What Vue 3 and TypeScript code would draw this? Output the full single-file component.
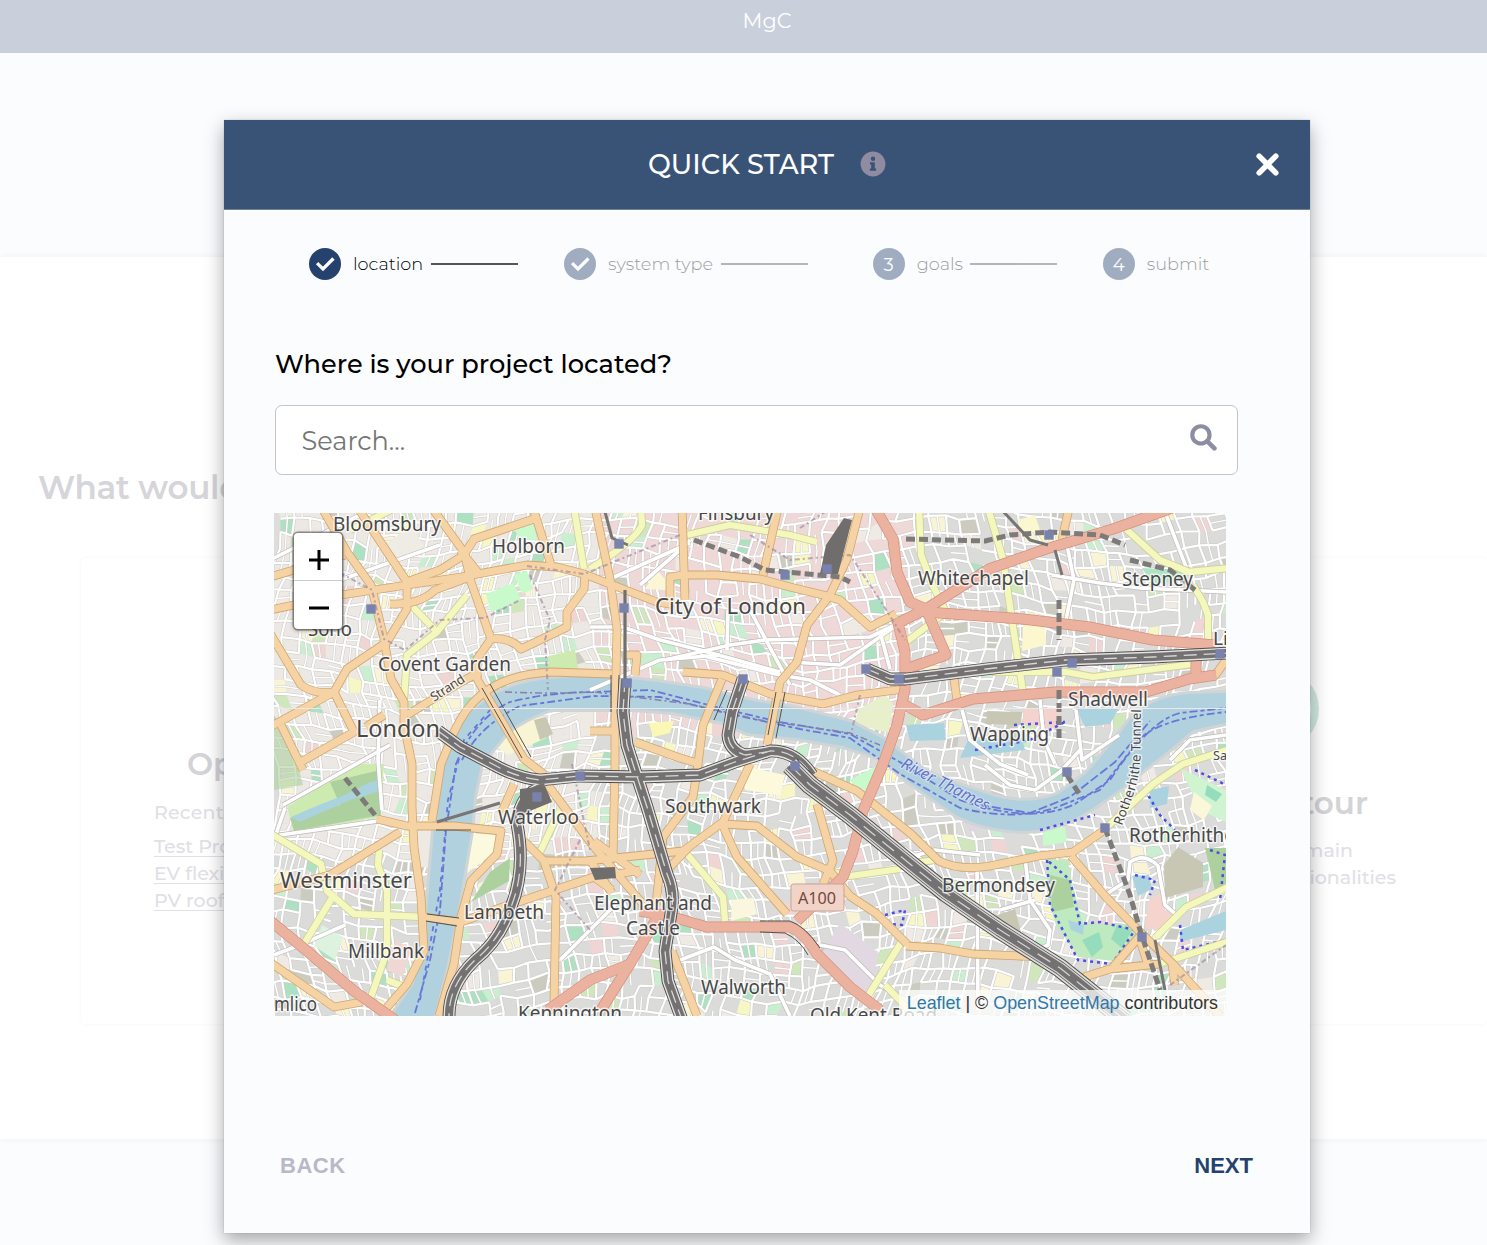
<script setup lang="ts">
interface Step { mark: string; label: string; width: number; start: number; line: number; active?: boolean }
interface Label { t: string; x: number; y: number; w: number; s: number }
interface Cell { d: string; fill: string }

const steps: Step[] = [
  { mark: 'check', label: 'location', width: 70, start: 0, line: 87.5, active: true },
  { mark: 'check', label: 'system type', width: 105, start: 46, line: 87.5 },
  { mark: '3', label: 'goals', width: 46, start: 64.7, line: 87 },
  { mark: '4', label: 'submit', width: 64, start: 45.6, line: 0 },
]

// Seeded generator keeps the street mesh stable between renders.
let seed = 71
const rnd = (): number => {
  seed = (seed * 16807) % 2147483647
  return seed / 2147483647
}
const COLS = 66
const ROWS = 37
const pts: number[][][] = []
for (let r = 0; r <= ROWS; r++) {
  const row: number[][] = []
  for (let c = 0; c <= COLS; c++) {
    const x = 266 + c * 15
    const y = 500 + r * 14.5
    row.push([
      Math.round((x + Math.sin(y / 42 + x / 190) * 13 + (rnd() - 0.5) * 6) * 10) / 10,
      Math.round((y + Math.sin(x / 55) * 11 + (rnd() - 0.5) * 6) * 10) / 10,
    ])
  }
  pts.push(row)
}
const cells: Cell[] = []
let streets = ''
let lanes = ''
const blots = ['#c9eed0', '#f7f7c6', '#efd5d3', '#d0e6bc', '#efeae4', '#f8f4d5', '#aee0c2', '#cccbc0']
for (let r = 0; r < ROWS; r++) {
  for (let c = 0; c < COLS; c++) {
    const [a, b, d, e] = [pts[r][c], pts[r][c + 1], pts[r + 1][c + 1], pts[r + 1][c]]
    const central = a[0] > 590 && a[0] < 900 && a[1] < 720
    const west = a[0] < 590 && a[1] < 850
    const k = rnd()
    let fill = central ? '#efd9d8' : west ? '#ece8e3' : '#dbdbd9'
    if (k > 0.77) fill = blots[Math.floor(rnd() * blots.length)]
    cells.push({ d: `M${a}L${b}L${d}L${e}Z`, fill })
    if (rnd() > 0.16) streets += `M${a}L${b}`
    if (rnd() > 0.16) streets += `M${a}L${e}`
    if (rnd() > 0.5) {
      const m = [(a[0] + b[0]) / 2, (a[1] + b[1]) / 2]
      const n = [(d[0] + e[0]) / 2, (d[1] + e[1]) / 2]
      lanes += rnd() > 0.3 ? `M${m}L${n}` : `M${(a[0] + e[0]) / 2},${(a[1] + e[1]) / 2}L${(b[0] + d[0]) / 2},${(b[1] + d[1]) / 2}`
    }
  }
}

const river =
  'M392 1016L414 984L426 924L434 831L444 764L451 739Q458 722 474 710Q490 695 507 689Q530 680 551 679L594 675L657 682L703 689L757 702L790 707L850 722L883 739L926 772L956 784L996 797Q1030 806 1059 794L1086 774L1099 759L1119 735Q1134 712 1150 704Q1170 695 1190 694L1230 693L1230 722L1193 730L1169 750L1146 768L1123 787L1093 808Q1060 829 1026 831Q985 830 956 815L906 780L883 759L843 746L797 738L747 733L723 722L673 712L633 709L551 709Q525 718 507 732L481 764L474 797L471 831L457 914L447 964L434 1016Z'

const minor = [
  'M590 627L623 627L660 640L700 650L780 672', 'M640 585L680 550L690 540', 'M612 578L690 543', 'M665 660L730 645L765 640L870 637L895 625',
  'M728 610L727 650', 'M750 610L790 685', 'M790 662L840 665L897 625', 'M880 632L890 669', 'M700 655L780 675L810 680L840 695',
  'M1052 575L1100 583L1140 588L1226 592', 'M1067 545L1074 580L1066 620', 'M1165 512L1188 572', 'M962 710L970 740L1000 764L1028 775',
  'M1040 700L1044 740L1055 764', 'M1076 710L1082 760L1119 735', 'M283 805L390 745', 'M280 835L378 821', 'M274 840L285 808',
  'M270 560L360 515', 'M340 580L440 545', 'M900 860L935 850L980 855', 'M1025 858L1030 900L1050 930L1048 945L1020 958',
  'M1105 895L1128 880L1130 862Q1145 852 1158 866L1165 905L1180 918', 'M820 945L845 950L880 985L905 1000', 'M675 962L714 947L735 960L770 974L790 1016',
  'M380 700L378 760L382 810', 'M1170 760L1190 740L1226 735', 'M985 765L1010 785L1035 790L1060 772L1080 750', 'M274 955L300 945L345 925',
  'M1000 910L1035 900', 'M977 865L978 1010', 'M860 820L930 865', 'M590 690L660 660L720 655', 'M560 960L620 900',
]

const yellow = [
  'M467 595L437 632L407 655L404 699', 'M411 605L437 632', 'M574 508L584 569', 'M641 508L642 525Q636 540 590 569',
  'M687 535L730 525L790 535L817 542', 'M919 508L921 555L933 586L946 612L906 642', 'M988 508L1003 559L1012 620L1023 692',
  'M1126 529L1160 560L1189 572L1230 568', 'M1193 585L1203 602L1208 615L1208 645', 'M993 672L1066 672L1093 677L1193 664',
  'M268 832L321 864L327 891L354 914L424 917', 'M335 893L304 944', 'M379 850L378 865L387 891L387 951L371 997', 'M687 854L723 897L725 921',
  'M832 872L850 876L900 869', 'M902 941L863 1004', 'M1103 831L1153 784L1183 764L1230 749', 'M1156 937L1186 907L1230 886',
  'M1159 964L1230 941', 'M906 864L935 860', 'M560 810L540 852', 'M885 985L915 1016', 'M387 980L402 986', 'M350 530L395 508',
]

const orange = [
  'M270 610L341 595L407 585L461 577L527 565L557 567L584 574L623 589L657 602L670 604L670 577L683 575L717 575L760 579L790 587L823 595L840 600L870 627L896 614',
  'M270 577L345 555', 'M322 508L347 552L371 585L384 639L391 679L404 702L404 725L412 764L412 807L414 847L421 897L424 951L407 984L384 1011',
  'M358 508L407 582L407 609L387 642L347 669L334 692L270 727', 'M432 508L464 552L471 582L491 639L477 659L477 679L524 759L545 775',
  'M491 639Q510 637 521 649L540 640L567 627L567 612L584 589L585 572', 'M533 508L551 565', 'M534 519L474 539L464 555L440 570L407 582',
  'M390 604Q420 605 435 590L470 577', 'M268 630L301 685Q315 695 334 692L354 732L301 762M281 725L303 770',
  'M432 821L441 764L454 732Q465 708 481 695Q507 674 551 672L612 674', 'M683 672L723 675L770 694L823 704L857 695L905 689', 'M407 715L461 682L480 672',
  'M595 508L610 579L617 629L615 719L615 764L613 858', 'M590 731L615 731', 'M682 508L685 600', 'M778 508L763 575',
  'M860 508L847 559L830 595L807 625L797 662L780 682L767 745', 'M722 679L703 725L698 764L693 797L663 837L656 905',
  'M635 742L680 758L700 764', 'M586 861L683 851L723 822L750 764M670 867L690 846', 'M723 824L757 826L797 857L830 871L850 896L877 914L907 944',
  'M722 824L737 857L787 914', 'M817 804L833 861L823 884', 'M797 764L857 791L910 833L939 861Q960 871 990 866L1039 856L1073 852L1103 831',
  'M1071 856L1106 897L1139 931L1173 964L1220 1016', 'M1078 979L1110 969L1159 964', 'M1139 937L1113 967', 'M1140 940L1148 965', 'M1172 964L1175 985',
  'M377 819L407 826L454 826L501 831L497 854L471 881L461 917L454 964L439 1016', 'M424 917L461 922L500 908L594 877L612 890',
  'M514 784L501 814', 'M547 784L594 847L643 904', 'M524 841L544 861L594 861M544 861L556 897L554 1004', 'M594 841L640 875',
  'M268 891L330 875L400 832', 'M268 961L334 1007L362 1002', 'M672 951L697 1016', 'M906 946L940 948L973 954L1045 957', 'M1069 508L1062 540',
  'M953 672L957 700', 'M625 655L637 655L635 675', 'M1226 660L1214 677', 'M384 715L366 727', 'M460 550L480 575', 'M613 875L640 870', 'M612 893L590 860',
]

const red = [
  'M1172 508L1113 529L1046 549L989 569L926 609L900 622', 'M875 508L893 539L897 572L910 602L926 609L946 655L906 669',
  'M897 619L905 652L905 689L897 725L883 764L863 811L853 851L843 877L797 921', 'M926 612L1023 619L1089 627L1153 640L1215 645',
  'M905 705L923 715L973 699L1056 692L1146 692L1189 679L1216 675M1196 650L1196 680', 'M640 911L673 917L707 927L790 927Q805 933 817 954L850 987L880 1010',
  'M657 918L630 964L601 1010', 'M630 964L590 980L548 1010', 'M268 919L307 951L354 991L395 1020',
]

const rails = [
  'M438 731L460 747L500 768Q520 778 540 780L580 776L640 777L700 775L735 762L770 751Q795 750 812 775',
  'M545 787Q520 792 517 824Q526 870 511 907Q500 940 475 960Q449 985 449 1016',
  'M625 679L623 712L627 745L633 764L647 807L667 874Q674 890 672 907L665 951L668 981L682 1020',
  'M743 679L732 712L728 735Q729 750 745 755L767 752', 'M867 669L890 679L906 679L986 669L1066 660L1153 657L1230 653',
]
const trunk = 'M790 765L810 785L850 815L910 864L946 893L1000 930L1060 968L1125 1020'

const stations = [
  [619, 544], [785, 575], [827, 569], [624, 608], [743, 679], [627, 683], [866, 669], [899, 679], [1049, 535], [1072, 663],
  [1057, 672], [1220, 654], [371, 609], [580, 776], [537, 797], [795, 766], [1067, 772], [1105, 828], [1142, 937],
]

const labels: Label[] = [
  { t: 'Bloomsbury', x: 333, y: 531, w: 108, s: 19.5 }, { t: 'Holborn', x: 492, y: 553, w: 73, s: 19 },
  { t: 'Finsbury', x: 698, y: 520, w: 76, s: 19 }, { t: 'Whitechapel', x: 918, y: 585, w: 111, s: 19 },
  { t: 'Stepney', x: 1122, y: 586, w: 71, s: 19 }, { t: 'City of London', x: 655, y: 614, w: 151, s: 22.5 },
  { t: 'Soho', x: 308, y: 636, w: 44, s: 19 }, { t: 'Covent Garden', x: 378, y: 671, w: 133, s: 19 },
  { t: 'Li', x: 1213, y: 645, w: 15, s: 18 }, { t: 'Shadwell', x: 1068, y: 706, w: 80, s: 19 },
  { t: 'London', x: 356, y: 737, w: 84, s: 23 }, { t: 'Wapping', x: 970, y: 740.5, w: 79, s: 19 },
  { t: 'Southwark', x: 665, y: 813, w: 96, s: 19 }, { t: 'Waterloo', x: 498, y: 824, w: 81, s: 19 },
  { t: 'Rotherhithe', x: 1129, y: 842, w: 106, s: 19 }, { t: 'Westminster', x: 280, y: 888, w: 132, s: 22 },
  { t: 'Bermondsey', x: 942, y: 892, w: 113, s: 19 }, { t: 'Elephant and', x: 594, y: 909.5, w: 118, s: 19 },
  { t: 'Castle', x: 626, y: 934.5, w: 54, s: 19 }, { t: 'Lambeth', x: 464, y: 919, w: 80, s: 19 },
  { t: 'Millbank', x: 348, y: 957.5, w: 76, s: 19 }, { t: 'Walworth', x: 701, y: 994, w: 85, s: 19 },
  { t: 'mlico', x: 274, y: 1011, w: 43, s: 19 }, { t: 'Kennington', x: 518, y: 1020, w: 104, s: 19 },
  { t: 'Old Kent Road', x: 810, y: 1022, w: 127, s: 19 }, { t: 'Sa', x: 1213, y: 760, w: 14, s: 12 },
]
</script>

<template>
  <div class="page">
    <header class="topbar">MgC</header>
    <main class="welcome">
      <h1>What would</h1>
      <div class="cards">
        <section class="card recent">
          <h2>Op</h2>
          <p>Recent</p>
          <a>Test Pro</a>
          <a>EV flexi</a>
          <a>PV roof</a>
        </section>
        <section class="card tour">
          <div class="ring"></div>
          <h2>tour</h2>
          <p class="main-line">main</p>
          <p>ionalities</p>
        </section>
      </div>
    </main>

    <div class="overlay">
      <div class="modal">
        <div class="modal-head">
          <span class="title">QUICK START</span>
          <svg class="info" viewBox="0 0 26 26">
            <circle cx="13" cy="13" r="12.4" fill="#8f8ca1" />
            <circle cx="13" cy="7.8" r="2.2" fill="#395377" />
            <path d="M10 11.2h4.8v6.2h1.3v2.3H9.9v-2.3h1.3v-3.9H10z" fill="#395377" />
          </svg>
          <svg class="close" viewBox="0 0 24 24"><path d="M4 4L20 20M20 4L4 20" stroke="#fff" stroke-width="5.3" stroke-linecap="round" /></svg>
        </div>

        <div class="steps">
          <div v-for="s in steps" :key="s.label" class="step" :class="{ active: s.active }" :style="{ marginLeft: s.start + 'px' }">
            <span class="dot">
              <svg v-if="s.mark === 'check'" viewBox="0 0 32 32"><path d="M9.3 16.3L14 21L23.3 11.7" fill="none" stroke="#fff" stroke-width="3.3" stroke-linecap="square" /></svg>
              <template v-else>{{ s.mark }}</template>
            </span>
            <span class="step-label" :style="{ width: s.width + 'px' }">{{ s.label }}</span>
            <span v-if="s.line" class="line" :style="{ width: s.line + 'px' }"></span>
          </div>
        </div>

        <div class="body">
          <h3>Where is your project located?</h3>
          <div class="search">
            <span>Search...</span>
            <svg viewBox="0 0 26 26"><circle cx="10.5" cy="10.5" r="8.3" fill="none" stroke="#8c8ca3" stroke-width="4" /><path d="M17 17L23.5 23.5" stroke="#8c8ca3" stroke-width="4.4" stroke-linecap="round" /></svg>
          </div>

          <div class="map">
            <svg class="tiles" viewBox="274 513 952 503">
              <defs><path id="tunnel-line" d="M1122 826L1133 796Q1140 775 1140.5 755L1141 706" /></defs>
              <rect x="274" y="513" width="952" height="503" fill="#dedddb" />
              <path v-for="(c, i) in cells" :key="i" :d="c.d" :fill="c.fill" />
              <g fill="none" stroke-linejoin="round">
                <path :d="lanes" stroke="#cdccca" stroke-width="2.3" />
                <path :d="streets" stroke="#cbcac8" stroke-width="3.2" />
                <path :d="lanes" stroke="#fff" stroke-width="1.4" />
                <path :d="streets" stroke="#fff" stroke-width="2.2" />
              </g>

              <g>
                <path d="M287 807L354 764L384 764L381 817L294 831Z" fill="#cdebb0" />
                <path d="M330 782L380 770L381 815L294 831L290 818L340 805Z" fill="#add19e" />
                <path d="M291 817Q320 804 345 795L370 782L379 781L377 792L350 800L300 822Z" fill="#aad3df" />
                <path d="M274 715Q292 740 303 785L274 790Z" fill="#add19e" opacity="0.6" />
                <path d="M486 594L514 583L521 600L491 612Z" fill="#c8facc" />
                <path d="M514 575L527 571L533 589L522 594Z" fill="#c8facc" />
                <path d="M387 543L412 525L424 547L397 568Z" fill="#efebe5" />
                <path d="M515 530L534 524L537 540L519 539Z" fill="#c8facc" />
                <path d="M548 656L575 650L578 669L549 671Z" fill="#cdebb0" />
                <path d="M502 720L538 715L546 738L508 755L494 745Z" fill="#f8f5d5" />
                <path d="M534 720L546 717L553 734L540 740Z" fill="#c7c7b4" />
                <path d="M472 834L495 834L494 853L467 873Z" fill="#fcfade" />
                <path d="M418 830L438 830L431 868L419 867Z" fill="#eee9e3" />
                <path d="M490 872L510 858L509 881L471 902Z" fill="#add19e" />
                <path d="M322 925L343 937L335 960L314 946Z" fill="#ddf3df" />
                <path d="M396 940L411 949L403 977L386 970Z" fill="#efd7d4" />
                <path d="M657 570L669 584L667 590L645 589Z" fill="#fbf7d5" />
                <path d="M649 723L674 721L670 733L653 737Z" fill="#fbf7b5" />
                <path d="M858 710L885 694L893 704L889 733L855 724Z" fill="#e7efcb" />
                <path d="M740 765L785 775L780 795L745 790Z" fill="#fcf9dd" />
                <path d="M850 780L878 765L880 778L860 795Z" fill="#c8facc" />
                <path d="M732 900L753 898L757 914L731 921Z" fill="#fbf7df" />
                <path d="M840 923L879 953L866 1004L817 961Z" fill="#e2d8e2" />
                <path d="M1023 625L1045 625L1046 645L1022 651Z" fill="#fcf7cf" />
                <path d="M987 711L1022 712L1021 725L986 724Z" fill="#c7c7b4" />
                <path d="M1023 709L1060 709L1056 729L1023 724Z" fill="#f4d3cf" />
                <path d="M906 725L944 723L946 740L910 741Z" fill="#aad3df" />
                <path d="M968 740L1022 738L1025 750L960 758Z" fill="#aad3df" />
                <path d="M1076 708L1119 708L1110 724L1085 727Z" fill="#aad3df" />
                <path d="M1142 568L1185 570L1189 580L1152 584Z" fill="#aee3c4" />
                <path d="M1047 858L1068 862L1072 882L1083 924L1133 924L1140 933L1113 961L1079 957L1056 925L1047 895Z" fill="#bfe9bf" />
                <path d="M1050 875L1070 880L1074 907L1052 912Z" fill="#add19e" />
                <path d="M1068 920L1084 925L1083 935L1071 930Z" fill="#aad3df" />
                <path d="M1082 940L1099 932L1103 947L1092 957ZM1111 939L1117 925L1132 930L1122 948Z" fill="#95dcbc" />
                <path d="M1043 830L1065 827L1067 842L1043 846Z" fill="#c8facc" />
                <path d="M1164 865L1178 847L1203 863L1203 887L1165 898Z" fill="#c7c7b4" />
                <path d="M1149 900L1162 892L1165 910L1174 915L1157 930L1145 928Z" fill="#f5d4ce" />
                <path d="M1180 930L1226 911L1226 930L1180 942Z" fill="#aad3df" />
                <path d="M1132 876L1149 875L1152 889L1138 896Z" fill="#aad3df" />
                <path d="M1150 790L1169 786L1167 804L1150 808Z" fill="#aad3df" />
                <path d="M1180 768L1226 790L1226 822L1200 810Z" fill="#d0f3d0" />
                <path d="M1194 792L1212 806L1204 820L1190 810Z" fill="#fbf8d9" />
                <path d="M1207 785L1222 794L1216 802L1205 795Z" fill="#95dcbc" />
                <path d="M1205 848L1226 848L1226 887L1215 890Z" fill="#add19e" />
                <path d="M965 820L983 816L984 828L970 832Z" fill="#e0d5e0" />
                <path d="M989 918L1015 909L1023 940L1000 935Z" fill="#c7c7b4" />
                <path d="M1018 520L1035 515L1040 530L1022 535Z" fill="#fbf7cf" />
              </g>

              <path :d="river" fill="#dddcdb" stroke="#cfd4d6" stroke-width="6" stroke-linejoin="round" />
              <path :d="river" fill="#b0d1dd" />
              <g fill="none" stroke="#5b68d8" stroke-width="1.8" stroke-dasharray="8 3 4 3" opacity="0.85">
                <path d="M415 1013L430 960L440 910L446 830L456 764Q475 718 510 702Q550 692 594 692L650 690L720 708L780 722L850 734L905 765L960 800Q1030 825 1075 804L1110 780Q1150 720 1180 713L1226 708" />
                <path d="M462 760Q480 725 520 706L594 696L660 697L730 714L800 729L850 738L900 774L960 808Q1020 822 1060 806L1100 790L1135 745Q1150 720 1226 712" />
                <path d="M420 1000L440 890L448 800L464 740L490 710" stroke-dasharray="5 5" />
                <path d="M980 805L1030 813L1070 797L1115 762L1150 721" stroke-dasharray="9 3" />
              </g>
              <path d="M505 692Q550 694 594 692L690 704L760 720L850 733L880 745" fill="none" stroke="#8881a5" stroke-width="1.5" stroke-dasharray="7 3 2 3" />
              <g fill="none" stroke="#4b50e2" stroke-width="2.5" stroke-dasharray="3 4">
                <path d="M1047 860L1050 905L1078 960L1112 964L1135 930L1100 922L1080 924L1070 880Z" />
                <path d="M1180 925L1183 950L1226 940M1145 790L1160 815L1175 830M1210 850L1225 855L1220 900M1135 875L1155 880L1150 895M975 750L1030 740L1065 722M1014 725L1065 722M885 915L905 910L902 925L888 924M1040 830L1095 815M1195 770L1226 785" />
              </g>

              <g fill="none" stroke-linejoin="round">
                <path v-for="(d, i) in minor" :key="'mc' + i" :d="d" stroke="#bdbbb9" stroke-width="5" />
                <path v-for="(d, i) in minor" :key="'m' + i" :d="d" stroke="#fff" stroke-width="3.7" />
                <path v-for="(d, i) in yellow" :key="'yc' + i" :d="d" stroke="#cdcf9d" stroke-width="8" />
                <path v-for="(d, i) in yellow" :key="'y' + i" :d="d" stroke="#f5f8bd" stroke-width="6.3" />
                <path v-for="(d, i) in orange" :key="'oc' + i" :d="d" stroke="#cfa770" stroke-width="8.8" />
                <path v-for="(d, i) in orange" :key="'o' + i" :d="d" stroke="#f6d3a5" stroke-width="7.2" />
                <path v-for="(d, i) in red" :key="'rc' + i" :d="d" stroke="#d48f7c" stroke-width="11" />
                <path v-for="(d, i) in red" :key="'r' + i" :d="d" stroke="#ecb2a0" stroke-width="9.6" />
                <g stroke="#55504b" stroke-width="1">
                  <path d="M482 688L522 758M490 684L531 757M436 830L471 830M427 914L459 918M426 921L457 926M760 921L790 921Q805 926 820 948M760 932L785 933Q800 940 808 955M611 675V712M619 675V712M727 690L714 720M776 692L768 735M785 692L776 738" />
                </g>
                <g stroke="#9f82a0" stroke-width="2" stroke-dasharray="5 3 2 3" opacity="0.65">
                  <path d="M340 573L372 590L384 639L405 650L440 620L485 618L520 600M527 566L584 574L680 535M530 575L550 620L545 640L548 690M750 535L790 560L850 555L880 600L905 640M800 528L825 512M860 695L852 730M580 840L555 890L590 930M1170 985L1226 945M572 764L590 850" />
                </g>
                <g stroke="#7d7b79" stroke-width="5" stroke-dasharray="9 4">
                  <path d="M906 539L985 541L1010 535L1050 532L1100 535L1125 545" />
                  <path d="M1059 600V640M1059 690V740M1067 775L1080 795M1105 828L1130 895L1140 930L1160 990" />
                  <path d="M694 540L740 557L765 570L840 577L850 582M345 778L375 815M1130 560L1170 570L1195 590" />
                </g>
                <path d="M604 508L612 538L628 545M1000 508L1030 540L1048 545M1055 550L1062 575M1155 940L1165 990M437 822L500 803" stroke="#787674" stroke-width="3" />
                <g stroke="#4f4d4b" stroke-width="12.8"><path v-for="(d, i) in rails" :key="'ra' + i" :d="d" /></g>
                <g stroke="#e4e3e2" stroke-width="11"><path v-for="(d, i) in rails" :key="'rb' + i" :d="d" /></g>
                <g stroke="#737171" stroke-width="8.2"><path v-for="(d, i) in rails" :key="'rd' + i" :d="d" /></g>
                <g stroke="#d8d7d6" stroke-width="1.3" stroke-dasharray="13 7"><path v-for="(d, i) in rails" :key="'re' + i" :d="d" /></g>
                <path :d="trunk" stroke="#4f4d4b" stroke-width="19" />
                <path :d="trunk" stroke="#deddda" stroke-width="17" />
                <path :d="trunk" stroke="#555" stroke-width="13.5" />
                <path :d="trunk" stroke="#d6d5d4" stroke-width="12" />
                <path :d="trunk" stroke="#737171" stroke-width="9.5" />
                <path :d="trunk" stroke="#d3d2d1" stroke-width="1.3" stroke-dasharray="15 9" />
              </g>
              <path d="M844 518L852 520L838 574H820L826 545ZM590 868L615 867L616 878L595 880ZM520 789L545 786L552 802L520 815Z" fill="#6f6e6d" />
              <path d="M625 590V679" stroke="#70706f" stroke-width="3.2" />
              <path d="M274 708.5H1226" stroke="#e8e9e8" stroke-width="1" />
              <rect v-for="(p, i) in stations" :key="'s' + i" :x="p[0] - 4.7" :y="p[1] - 4.7" width="9.4" height="9.4" fill="#7981ad" />
              <rect x="791" y="884" width="53" height="27" rx="2.5" fill="#f1d3c8" stroke="#c9a398" />
              <text x="798" y="904" textLength="38" lengthAdjust="spacingAndGlyphs" font-size="17" fill="#714840" class="road">A100</text>
              <text v-for="l in labels" :key="l.t" :x="l.x" :y="l.y" :font-size="l.s" :textLength="l.w" lengthAdjust="spacingAndGlyphs" class="place">{{ l.t }}</text>
              <text transform="translate(434 702) rotate(-33)" font-size="13" textLength="38" class="place">Strand</text>
              <text font-size="13.2" class="place"><textPath href="#tunnel-line">Rotherhithe Tunnel</textPath></text>
              <text transform="translate(900 767) rotate(27)" font-size="16" textLength="97" lengthAdjust="spacingAndGlyphs" class="water">River Thames</text>
            </svg>
            <div class="zoom">
              <button aria-label="Zoom in"><svg viewBox="0 0 20 20"><path d="M0 10H20M10 0V20" stroke="#000" stroke-width="3" /></svg></button>
              <button aria-label="Zoom out"><svg viewBox="0 0 20 20"><path d="M0 10H20" stroke="#000" stroke-width="3" /></svg></button>
            </div>
            <div class="credit"><a>Leaflet</a> | © <a>OpenStreetMap</a> contributors</div>
          </div>
        </div>

        <div class="actions"><span class="back">BACK</span><span class="next">NEXT</span></div>
      </div>
    </div>
  </div>
</template>

<style>
body { margin: 0; overflow: hidden; }
</style>

<style scoped>
* { box-sizing: border-box; }
.page { position: relative; width: 1487px; height: 1245px; overflow: hidden; background: #fbfcfe; font-family: Montserrat, Inter, sans-serif; }
h1, h2, h3, p { margin: 0; }
.topbar { height: 53px; padding: 6px 0 0 47px; background: #c9cfdb; color: #fff; text-align: center; font-size: 20.8px; line-height: 29px; }
.welcome { height: 882px; margin-top: 204px; padding-top: 210px; background: #fff; box-shadow: 0 0 7px rgba(0, 0, 0, 0.05); }
h1 { height: 91px; padding-left: 38px; color: #d5d5da; font-size: 32.5px; line-height: 42px; font-weight: 600; letter-spacing: -0.25px; }
.cards { display: flex; justify-content: space-between; }
.card { height: 466px; border-radius: 5px; box-shadow: 0 0 4px rgba(0, 0, 0, 0.045); color: #e0e0e5; font-size: 19px; line-height: 27px; font-weight: 500; }
.card h2 { color: #d3d3d8; font-size: 31px; line-height: 40px; font-weight: 600; }
.recent { width: 350px; margin-left: 81px; padding: 186px 0 0 73px; }
.recent h2 { padding-left: 33px; }
.recent p { margin: 15px 0 7px; letter-spacing: 0.2px; }
.recent a { display: block; text-decoration: underline; text-decoration-thickness: 1px; text-underline-offset: 3px; }
.tour { width: 260px; padding: 111px 91px 0 0; text-align: right; }
.ring { width: 80px; height: 80px; margin: 0 77px 0 auto; border: 8px solid #d1eae1; border-radius: 50%; }
.tour h2 { margin: 34px 28px 14px 0; }
.main-line { padding-right: 43px; }
.overlay { position: absolute; inset: 0; padding: 120px 0 0 224px; }
.modal { width: 1086px; height: 1113px; background: #fbfcfe; box-shadow: 0 0 1px rgba(90, 110, 130, 0.5), 0 7px 18px rgba(0, 0, 0, 0.35); display: flex; flex-direction: column; }
.modal-head { display: flex; align-items: center; height: 90px; padding: 0 30px 1px 424px; background: #395377; border-bottom: 1px solid #728299; color: #fff; }
.title { width: 187px; white-space: nowrap; font-size: 27.2px; font-weight: 500; }
.info { width: 26px; height: 26px; margin-left: 25px; }
.close { width: 25px; height: 25px; margin-left: auto; }
.steps { display: flex; height: 32px; margin: 38px 0 0 85px; }
.step { display: flex; align-items: center; opacity: 0.42; color: #111; }
.step.active { opacity: 1; color: #000; }
.dot { width: 32px; height: 32px; border-radius: 50%; background: #25426f; color: #fff; font-size: 18px; line-height: 34px; text-align: center; }
.dot svg { display: block; width: 32px; height: 32px; }
.step-label { margin: 0 0 0 12px; font-size: 17.7px; font-weight: 300; line-height: 22px; white-space: nowrap; }
.line { height: 2px; margin-left: 7.5px; background: #555; }
.body { padding: 65px 0 0 51px; }
h3 { height: 60px; color: #000; font-size: 25.65px; line-height: 37px; font-weight: 500; white-space: nowrap; }
.search { display: flex; align-items: center; justify-content: space-between; width: 963px; height: 70px; padding: 0 20px 0 25.5px; border: 1px solid #c5c5c5; border-radius: 7px; background: #fff; color: #757575; font-size: 25.6px; }
.search span { padding-top: 1px; }
.search svg { width: 27px; height: 27px; margin-bottom: 6px; }
.map { position: relative; width: 952px; height: 503px; margin: 38px 0 0 -1px; overflow: hidden; }
.tiles { display: block; width: 952px; height: 503px; }
.place, .water, .road { font-family: "Noto Sans", sans-serif; }
.place { fill: #484848; stroke: rgba(255, 255, 255, 0.7); stroke-width: 3px; stroke-linejoin: round; paint-order: stroke; }
.water { fill: #6472c9; font-style: italic; stroke: rgba(225, 237, 245, 0.75); stroke-width: 2px; paint-order: stroke; }
.zoom { position: absolute; left: 20px; top: 20px; width: 48px; height: 96px; border-radius: 4px; background: #fff; box-shadow: 0 0 0 1.5px rgba(80, 80, 80, 0.55), 0 1px 4px rgba(0, 0, 0, 0.5); }
.zoom button { display: flex; align-items: center; justify-content: center; width: 48px; height: 48px; padding: 7px 0 0 2px; border: 0; border-bottom: 1px solid #ccc; background: transparent; }
.zoom button + button { border-bottom: 0; padding-top: 6px; }
.zoom svg { width: 20px; height: 20px; }
.credit { position: absolute; right: 0; bottom: 0; height: 26px; padding: 0 8px; background: rgba(255, 255, 255, 0.74); color: #333; font: 17.9px/27px "Liberation Sans", Arial, sans-serif; white-space: nowrap; }
.credit a { color: #2f78a7; }
.actions { display: flex; justify-content: space-between; margin: 135px 57px 0 56px; font: bold 22px/30px "Liberation Sans", Arial, sans-serif; }
.back { color: #b8b9c8; letter-spacing: 0.5px; }
.next { color: #25426f; }
</style>
